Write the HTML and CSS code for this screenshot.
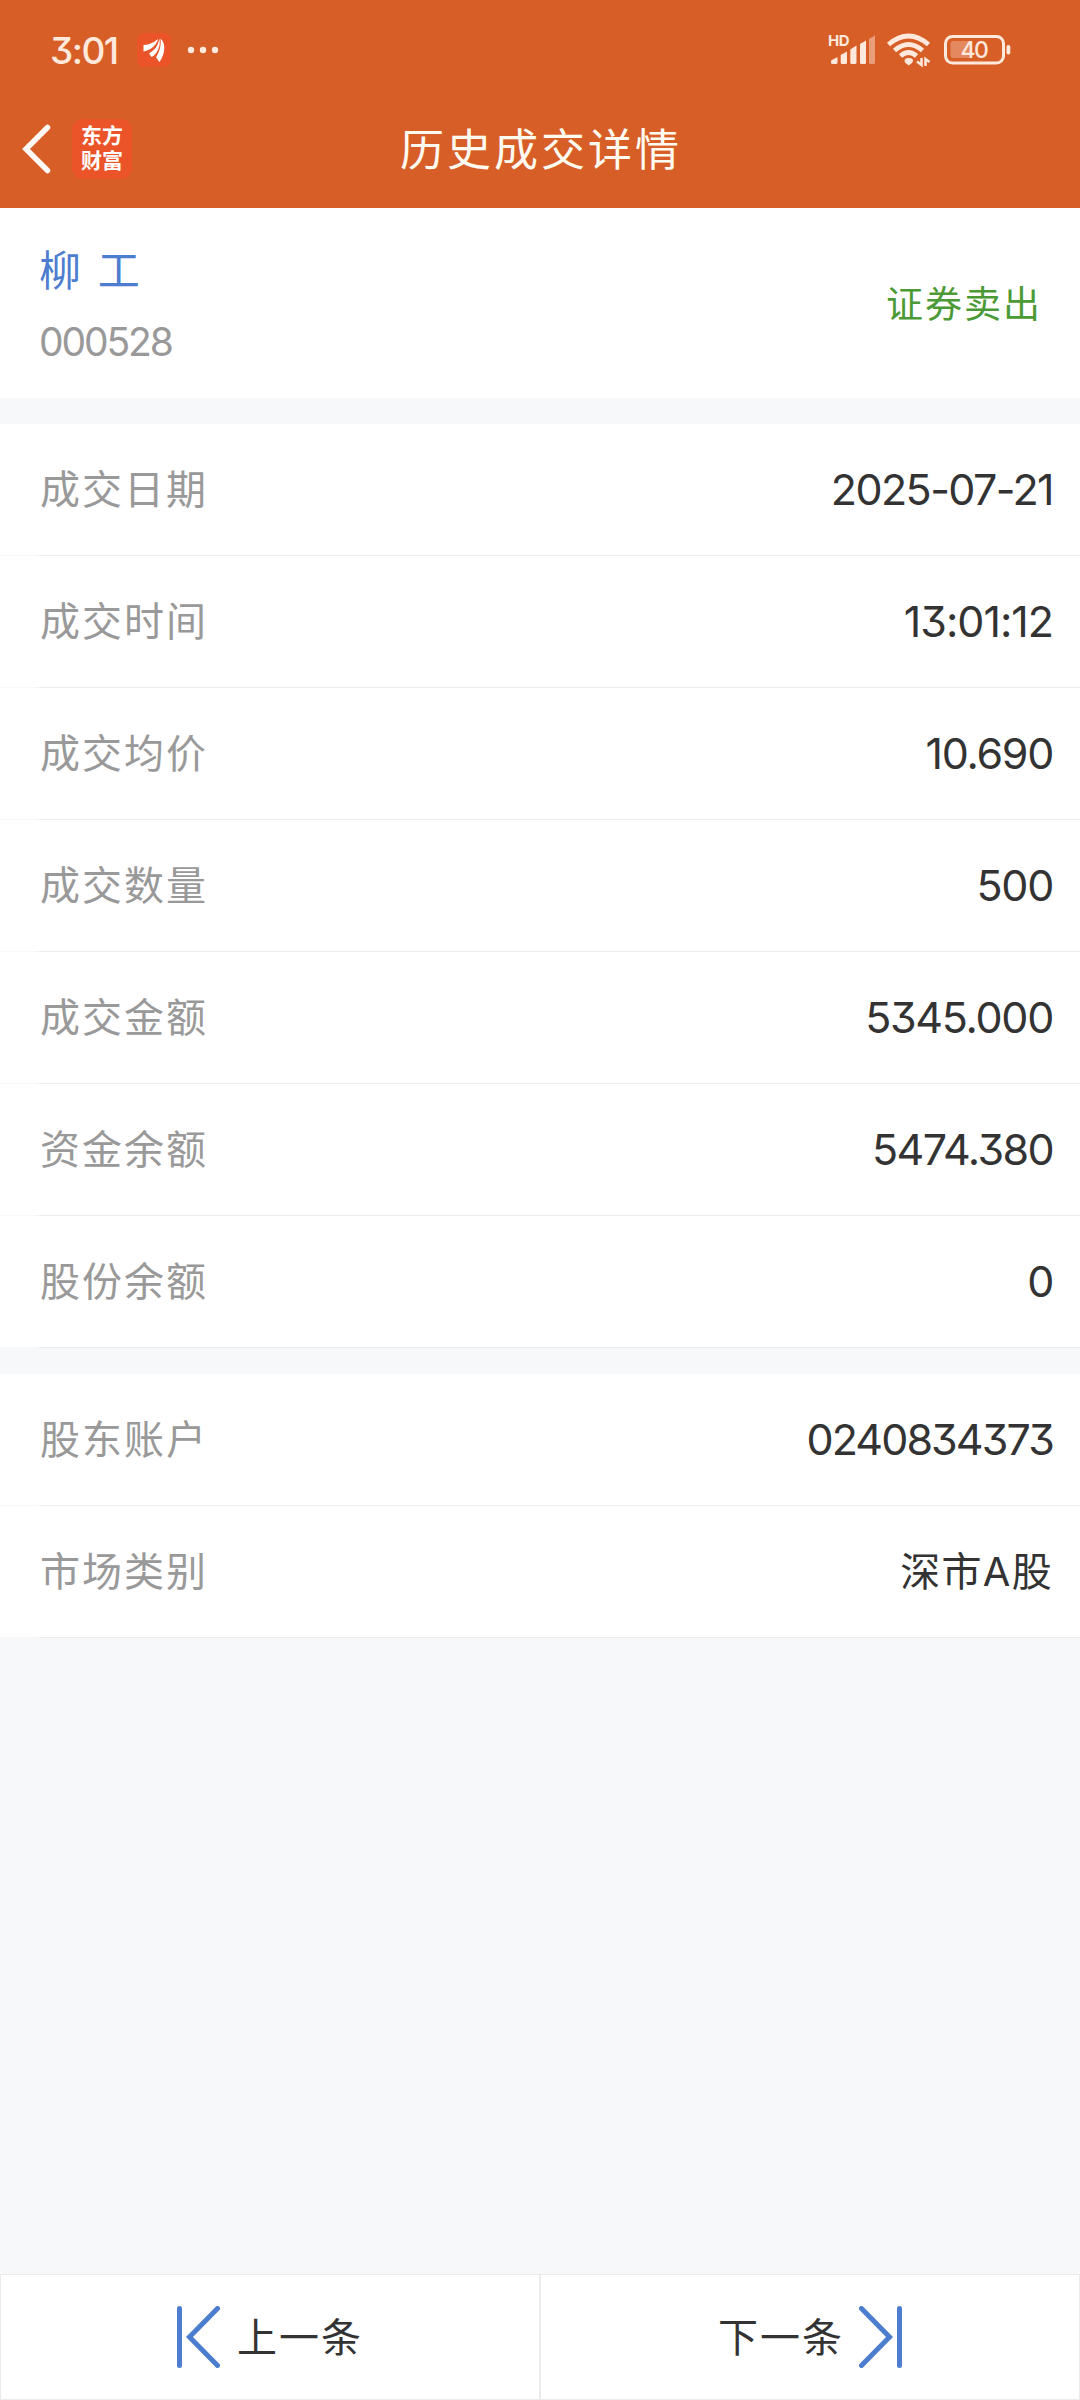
FILE: index.html
```html
<!DOCTYPE html>
<html lang="zh-CN">
<head>
  <meta charset="UTF-8">
  <meta name="viewport" content="width=device-width, initial-scale=1.0">
  <title>历史成交详情</title>
  <link rel="stylesheet" href="styles.css">
</head>
<body>
  <div class="page">
    <header class="header">
      <!-- Status bar -->
      <div class="status-bar">
        <span class="time">3:01</span>
        <svg class="app-icon" width="34" height="34" viewBox="0 0 34 34">
          <rect width="34" height="34" rx="7" fill="#eb5428"/>
          <path d="M6.500 12C11 12 16 10 21 6C20 11 15 17 6.500 18.500Z" fill="#fff"/>
          <path d="M12 20.500C18 17 21.500 12 22.200 5.500C24.500 13 19.500 22 14.500 24Z" fill="#fff"/>
          <path d="M19 24.500C23 18 24.300 12 23.500 5.500C29.500 11 28 21 22.500 29Z" fill="#fff"/>
        </svg>
        <svg class="more" width="32" height="8" viewBox="0 0 32 8">
          <g fill="#ffeadd">
            <circle cx="4" cy="4" r="3.200"/>
            <circle cx="16" cy="4" r="3.200"/>
            <circle cx="28" cy="4" r="3.200"/>
          </g>
        </svg>
        <svg class="status-icons" width="184" height="40" viewBox="0 0 184 40">
          <!-- signal -->
          <g fill="#ffe8dc">
            <text x="0" y="16" class="hd">HD</text>
            <path d="M3 30.500L9.500 27V32.500Q9.500 34 8 34H4.500Q3 34 3 32.500Z"/>
            <path d="M12.700 25L19 21.500V32.500Q19 34 17.500 34H14.200Q12.700 34 12.700 32.500Z"/>
            <path d="M22.300 19.500L28.500 15.500V32.500Q28.500 34 27 34H23.800Q22.300 34 22.300 32.500Z"/>
            <path d="M32 14L38 10.500V32.500Q38 34 36.500 34H33.500Q32 34 32 32.500Z"/>
            <path d="M41 9L47 5.500V32.500Q47 34 45.500 34H42.500Q41 34 41 32.500Z" opacity=".45"/>
          </g>
          <!-- wifi -->
          <g fill="none" stroke="#ffe8dc" stroke-width="4.800">
            <path d="M60.500 14.500Q80.500 -2.500 100.500 14.500"/>
            <path d="M66.500 20.500Q80.500 8.500 94.500 20.500"/>
            <path d="M72.500 26Q80.500 19 88.500 26"/>
          </g>
          <path d="M76.500 31Q76.500 28 80.800 28T85 31Q85 32.500 80.800 35.500Q76.500 32.500 76.500 31Z" fill="#ffe8dc"/>
          <path d="M89 31.500L93.500 35V28M97.500 36V29L101.500 32" fill="none" stroke="#ffe8dc" stroke-width="2.500"/>
          <!-- battery -->
          <rect x="117.500" y="6.500" width="58" height="26.500" rx="7" fill="none" stroke="#ffe8dc" stroke-width="3"/>
          <rect x="122.500" y="11" width="21" height="17" rx="3" fill="#e4895f"/>
          <rect x="178.500" y="15" width="3.800" height="9.500" rx="1.800" fill="#ffe8dc"/>
          <text x="146" y="28" class="battery-text">40</text>
        </svg>
      </div>

      <!-- Title bar -->
      <div class="nav-bar">
        <svg class="back" width="30" height="50" viewBox="0 0 30 50">
          <path d="M25.500 3.500L4 25L25.500 46.500" fill="none" stroke="#fffaf5" stroke-width="5.500" stroke-linecap="round"/>
        </svg>
        <div class="logo">东方<br>财富</div>
        <h1>历史成交详情</h1>
      </div>
    </header>

    <section class="stock">
      <div>
        <div class="stock-name">柳 工</div>
        <div class="stock-code">000528</div>
      </div>
      <div class="trade-type">证券卖出</div>
    </section>

    <section class="group">
      <div class="row"><span class="label">成交日期</span><span class="value date">2025-07-21</span></div>
      <div class="row"><span class="label">成交时间</span><span class="value clock">13:01:12</span></div>
      <div class="row"><span class="label">成交均价</span><span class="value">10.690</span></div>
      <div class="row"><span class="label">成交数量</span><span class="value">500</span></div>
      <div class="row"><span class="label">成交金额</span><span class="value">5345.000</span></div>
      <div class="row"><span class="label">资金余额</span><span class="value balance">5474.380</span></div>
      <div class="row"><span class="label">股份余额</span><span class="value">0</span></div>
    </section>

    <section class="group">
      <div class="row"><span class="label">股东账户</span><span class="value account">0240834373</span></div>
      <div class="row"><span class="label">市场类别</span><span class="value market">深市A股</span></div>
    </section>

    <footer class="footer">
      <div class="page-btn prev">
        <svg width="43" height="62" viewBox="0 0 43 62">
          <path d="M2.500 2.500V59.500M40.500 2.500L12.500 31L40.500 59.500"/>
        </svg>
        <span>上一条</span>
      </div>
      <div class="page-btn next">
        <span>下一条</span>
        <svg width="43" height="62" viewBox="0 0 43 62">
          <path d="M40.500 2.500V59.500M2.500 2.500L30.500 31L2.500 59.500"/>
        </svg>
      </div>
    </footer>
  </div>
</body>
</html>
```

FILE: styles.css
```css
* {
  box-sizing: border-box;
}

body {
  margin: 0;
  font-family: Inter, "Noto Sans CJK SC", sans-serif;
  font-feature-settings: "cv09";
  background-color: #f7f8fa;
  color: #333;
}

.page {
  width: 1080px;
  height: 2400px;
  display: flex;
  flex-direction: column;
}

.header {
  height: 208px;
  background-color: #d75f27;
}

.status-bar {
  height: 100px;
  display: flex;
  align-items: center;
  padding: 0 68px 0 50px;
}

.time {
  width: 87px;
  font-size: 37px;
  font-weight: 500;
  letter-spacing: -1.5px;
  color: #ffe8dc;
}

.more {
  margin-left: 16px;
}

.status-icons {
  margin-left: auto;
}

.hd {
  font-size: 15px;
  font-weight: 700;
  letter-spacing: -0.5px;
}

.battery-text {
  font-size: 23px;
  font-weight: 500;
  letter-spacing: -1.5px;
  fill: #ffe8dc;
  text-anchor: middle;
}

.nav-bar {
  position: relative;
  height: 98px;
  display: flex;
  align-items: center;
  padding-left: 22px;
}

.logo {
  width: 60px;
  height: 60px;
  margin-left: 20px;
  padding-top: 4px;
  border-radius: 11px;
  background-color: #eb5429;
  color: #fff;
  font-size: 21px;
  font-weight: 700;
  line-height: 25px;
  text-align: center;
}

/* title sits over the bar so it stays centered */
h1 {
  position: absolute;
  left: 2px;
  right: 0;
  margin: 0;
  padding-top: 2px;
  font-size: 44px;
  font-weight: 400;
  line-height: 60px;
  letter-spacing: 3px;
  text-align: center;
  color: #fffaf0;
}

.stock {
  height: 190px;
  display: flex;
  align-items: center;
  justify-content: space-between;
  padding: 0 38px 0 39px;
  background-color: #fff;
}

.stock-name {
  padding-top: 6px;
  font-size: 42px;
  line-height: 60px;
  word-spacing: 5px;
  color: #4d7dcf;
}

.stock-code {
  margin-top: 11px;
  font-size: 39px;
  line-height: 60px;
  letter-spacing: -2.1px;
  color: #999;
}

.trade-type {
  padding-bottom: 3px;
  font-size: 37px;
  letter-spacing: 2px;
  color: #4c9a35;
}

.group {
  margin-top: 26px;
  background-color: #fff;
}

.row {
  height: 132px;
  display: flex;
  align-items: center;
  justify-content: space-between;
  padding: 0 27px 2px 40px;
  background: linear-gradient(to right, #f8f8f8 39px, #ebebeb 39px) bottom / 100% 1px no-repeat;
}

.row:last-child {
  background-image: linear-gradient(to right, #f7f8fa 39px, #ebebeb 39px);
}

.label {
  padding-bottom: 4px;
  font-size: 40px;
  letter-spacing: 2px;
  color: #999;
}

.value {
  font-size: 43px;
  letter-spacing: -1.3px;
}

.date,
.balance {
  letter-spacing: -1.6px;
}

.clock {
  letter-spacing: -1px;
}

.account {
  letter-spacing: -1.9px;
}

.market {
  padding-bottom: 4px;
  font-size: 40px;
  letter-spacing: 1.3px;
}

.footer {
  height: 126px;
  margin-top: auto;
  display: flex;
}

.page-btn {
  flex: 1;
  display: flex;
  align-items: center;
  justify-content: center;
  gap: 17px;
  border: 1px solid #ebebeb;
  background-color: #fff;
  font-size: 40px;
  letter-spacing: 2px;
}

.page-btn span {
  padding-bottom: 5px;
}

.next {
  gap: 15px;
}

.page-btn path {
  fill: none;
  stroke: #4d7dcf;
  stroke-width: 5;
  stroke-linecap: round;
}
```
